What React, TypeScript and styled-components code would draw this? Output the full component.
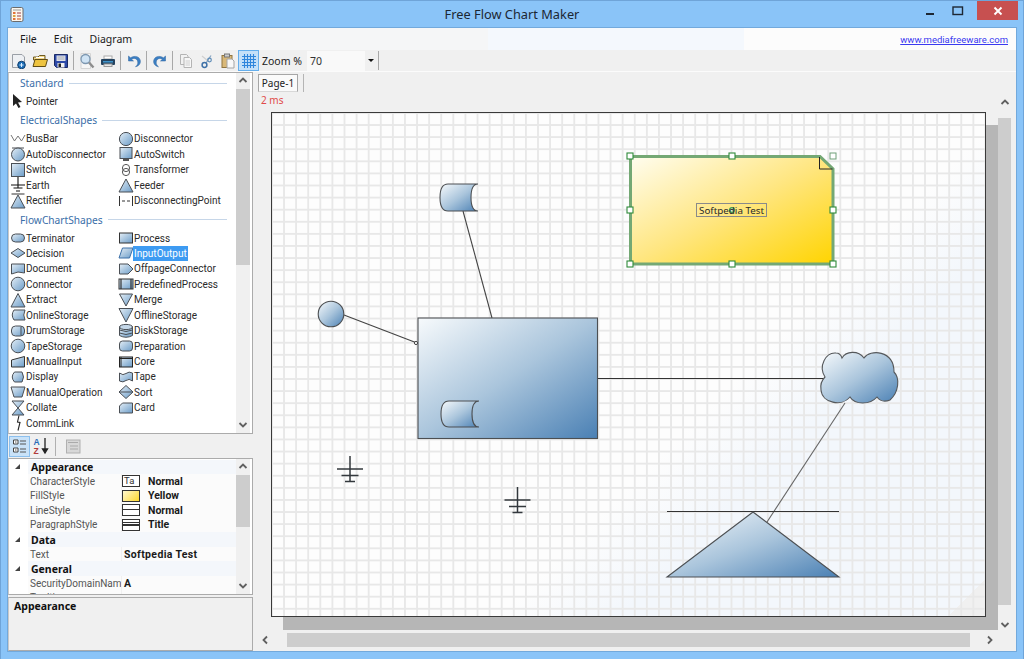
import React from "react";
import styled, { createGlobalStyle } from "styled-components";

const GlobalStyle = createGlobalStyle`
  html, body { margin: 0; padding: 0; background: #8ac4f8; }
  * { box-sizing: border-box; }
`;

const UI_FONT = `"Noto Sans", "Open Sans", "Liberation Sans", sans-serif`;
const LIST_FONT = `Roboto, "Noto Sans", "Liberation Sans", sans-serif`;

const Window = styled.div`
  width: 1024px;
  height: 659px;
  display: flex;
  flex-direction: column;
  background: #8ac4f8;
  border: 1px solid #6fa4d8;
  border-bottom: 0;
  font-family: ${UI_FONT};
  overflow: hidden;
`;

const TitleBar = styled.div`
  height: 26px;
  flex: none;
  display: grid;
  grid-template-columns: 1fr auto 1fr;
  align-items: center;
`;

const AppIconBox = styled.div`
  display: flex;
  padding-left: 9px;
`;

const Title = styled.div`
  font-size: 12.8px;
  color: #1c2733;
  padding-bottom: 1px;
`;

const WindowButtons = styled.div`
  display: flex;
  justify-self: end;
  align-self: start;
  align-items: center;
  margin-right: 5px;
`;

const WinButton = styled.div`
  width: 28px;
  height: 19px;
  display: flex;
  align-items: center;
  justify-content: center;
`;

const CloseButton = styled(WinButton)`
  width: 41px;
  background: #c75050;
  margin-left: 5px;
`;

const Client = styled.div`
  flex: 1;
  min-height: 0;
  margin: 0 6px 7px 6px;
  display: flex;
  flex-direction: column;
  background: #f0f0f0;
  border: 1px solid #72a9dc;
`;

const MenuBar = styled.div`
  height: 22px;
  flex: none;
  display: flex;
  align-items: center;
  justify-content: space-between;
  padding: 0 8px 0 4px;
  background: linear-gradient(to right, #f5f6f7 480px, #f4f8fd 480px, #f4f8fd 736px, #fcfcfc 736px);
`;

const Menus = styled.div`
  display: flex;
`;

const MenuItem = styled.span`
  font-size: 10.5px;
  color: #1a1a1a;
  padding: 0 8px;
  margin-right: 1px;
`;

const SiteLink = styled.a`
  font-family: ${LIST_FONT};
  font-size: 9.5px;
  color: #3a3af0;
  text-decoration: underline;
`;

const ToolBar = styled.div`
  height: 22px;
  flex: none;
  display: flex;
  align-items: center;
  background: #f0f0f0;
  border-bottom: 1px solid #fbfbfb;
`;

const ToolButton = styled.div<{ $active?: boolean }>`
  width: 21px;
  height: 21px;
  flex: none;
  display: flex;
  align-items: center;
  justify-content: center;
  background: ${(p) => (p.$active ? "#c4e0f8" : "transparent")};
  outline: ${(p) => (p.$active ? "1px solid #64aeec" : "none")};
  outline-offset: -1px;
`;

const ToolSep = styled.div`
  width: 1px;
  height: 19px;
  flex: none;
  margin: 0 2px;
  background: #a8a8a8;
`;

const ZoomLabel = styled.span`
  font-size: 10.5px;
  color: #222;
  margin-left: 3px;
  width: 45px;
  flex: none;
  white-space: nowrap;
`;

const ZoomCombo = styled.div`
  width: 69px;
  height: 20px;
  flex: none;
  display: flex;
  align-items: center;
  justify-content: space-between;
  background: #f9f9f9;
  font-size: 10.5px;
  color: #333;
  padding-left: 3px;
`;

const ComboArrow = styled.div`
  width: 11px;
  height: 100%;
  display: flex;
  align-items: center;
  justify-content: center;
  background: #f0f0f0;
  &::after {
    content: "";
    border-left: 3px solid transparent;
    border-right: 3px solid transparent;
    border-top: 3px solid #111;
  }
`;

const Main = styled.div`
  flex: 1;
  min-height: 0;
  display: flex;
`;

const LeftColumn = styled.div`
  width: 245px;
  flex: none;
  display: flex;
  flex-direction: column;
`;

const Palette = styled.div`
  height: 362px;
  flex: none;
  display: flex;
  background: #fff;
  border: 1px solid #ababab;
  border-left-color: #c8c8c8;
`;

const PaletteList = styled.div`
  flex: 1;
  min-width: 0;
  overflow: hidden;
  margin-top: -1.3px;
  padding-left: 1px;
`;

const SectionHeader = styled.div`
  height: 19px;
  display: flex;
  align-items: center;
  gap: 5px;
  margin: 1.8px 9px 1.2px 10px;
  font-size: 10.2px;
  color: #3a6ea8;
  &::after {
    content: "";
    flex: 1;
    height: 1px;
    background: #c6d6e8;
  }
`;

const ShapeGrid = styled.div`
  display: grid;
  grid-template-columns: 108px 108px;
`;

const ShapeRow = styled.div`
  height: 15.45px;
  display: flex;
  align-items: center;
  white-space: nowrap;
`;

const ShapeName = styled.span<{ $selected?: boolean }>`
  font-family: ${LIST_FONT};
  font-size: 10px;
  line-height: 15px;
  padding: 0 1px;
  margin-left: -1px;
  color: ${(p) => (p.$selected ? "#fff" : "#2a2a2a")};
  background: ${(p) => (p.$selected ? "#3d9bf2" : "transparent")};
`;

const VScroll = styled.div`
  width: 14px;
  flex: none;
  margin-right: 2px;
  display: flex;
  flex-direction: column;
  align-items: center;
  background: #f0f0f0;
`;

const PageVScroll = styled(VScroll)`
  width: 13px;
  margin-right: 5px;
  margin-bottom: 18px;
  padding-top: 3px;
`;

const ArrowCell = styled.div`
  height: 16px;
  width: 100%;
  flex: none;
  display: flex;
  align-items: center;
  justify-content: center;
`;

const Thumb = styled.div<{ $size: number; $gap?: number }>`
  width: 100%;
  height: ${(p) => p.$size}px;
  flex: none;
  margin-top: ${(p) => p.$gap ?? 0}px;
  background: #cdcdcd;
`;

const ScrollSpacer = styled.div`
  flex: 1;
`;

const PropTools = styled.div`
  height: 24px;
  flex: none;
  display: flex;
  align-items: center;
  padding-left: 1px;
`;

const PropButton = styled.div<{ $active?: boolean }>`
  width: 21px;
  height: 21px;
  display: flex;
  align-items: center;
  justify-content: center;
  background: ${(p) => (p.$active ? "#c9e2f8" : "transparent")};
  outline: ${(p) => (p.$active ? "1px solid #8cc0ee" : "none")};
  outline-offset: -1px;
`;

const PropSep = styled.div`
  width: 1px;
  height: 19px;
  margin: 0 6px 0 4px;
  background: #b0b0b0;
`;

const PropGrid = styled.div`
  height: 137px;
  flex: none;
  display: flex;
  background: #fff;
  border: 1px solid #ababab;
  border-left-color: #c8c8c8;
`;

const PropRows = styled.div`
  flex: 1;
  min-width: 0;
  overflow: hidden;
  padding-top: 0.5px;
`;

const CategoryRow = styled.div`
  height: 14.55px;
  display: flex;
  align-items: center;
  font-size: 10.5px;
  font-weight: 700;
  color: #111;
`;

const Caret = styled.div`
  width: 19px;
  height: 100%;
  flex: none;
  display: flex;
  align-items: center;
  justify-content: center;
  padding-right: 3px;
  &::after {
    content: "";
    border-left: 5px solid transparent;
    border-bottom: 5px solid #444;
  }
`;

const CategoryName = styled.div`
  flex: 1;
  height: 100%;
  display: flex;
  align-items: center;
  background: #f4f7fb;
  padding-left: 3px;
`;

const PropRow = styled.div`
  height: 14.55px;
  display: grid;
  grid-template-columns: 19px 93px 1fr;
  align-items: center;
  background: linear-gradient(to right, #fff 19px, #fbfbfb 19px);
`;

const PropName = styled.div`
  grid-column: 2;
  font-family: ${LIST_FONT};
  font-size: 10px;
  color: #555;
  padding-left: 2px;
  overflow: hidden;
  white-space: nowrap;
`;

const PropValue = styled.div<{ $wide?: boolean }>`
  height: 100%;
  display: flex;
  align-items: center;
  gap: 8px;
  padding-left: ${(p) => (p.$wide ? 2 : 0)}px;
  border-left: 1px solid #f0f0f0;
  font-family: ${LIST_FONT};
  font-size: 10.5px;
  font-weight: 700;
  letter-spacing: ${(p) => (p.$wide ? 0.35 : 0)}px;
  color: #1a1a1a;
  white-space: nowrap;
`;

const Swatch = styled.div<{ $fill?: string }>`
  width: 18px;
  height: 12px;
  flex: none;
  border: 1px solid #333;
  background: ${(p) => p.$fill ?? "#fff"};
  display: flex;
  align-items: center;
  font-size: 9.5px;
  font-weight: 400;
  line-height: 10px;
  padding-left: 1px;
  color: #333;
`;

const Description = styled.div`
  flex: 1;
  min-height: 0;
  margin-top: 2px;
  border: 1px solid #ababab;
  border-left-color: #c8c8c8;
  padding: 1px 5px;
  font-size: 10.5px;
  font-weight: 700;
  color: #111;
  background: #f0f0f0;
`;

const RightColumn = styled.div`
  flex: 1;
  min-width: 0;
  display: flex;
  flex-direction: column;
`;

const TabStrip = styled.div`
  height: 20px;
  flex: none;
  display: flex;
  align-items: stretch;
  padding: 2px 0 0 5px;
`;

const Tab = styled.div`
  width: 40px;
  height: 18px;
  display: flex;
  align-items: center;
  justify-content: center;
  background: #fafafa;
  border: 1px solid #a6a6a6;
  border-bottom-color: #d8d8d8;
  font-size: 10px;
  color: #222;
`;

const TabEnd = styled.div`
  width: 1px;
  margin-left: 5px;
  background: #b4b4b4;
`;

const Timing = styled.div`
  height: 16px;
  flex: none;
  padding-left: 8px;
  font-size: 10px;
  line-height: 16px;
  color: #e04a4a;
`;

const ViewerRow = styled.div`
  flex: 1;
  min-height: 0;
  display: flex;
`;

const ViewerColumn = styled.div`
  flex: 1;
  min-width: 0;
  display: flex;
  flex-direction: column;
`;

const Scroller = styled.div`
  flex: 1;
  min-height: 0;
  padding: 4px 0 0 18px;
  overflow: hidden;
`;

const Page = styled.div`
  position: relative;
  width: 715px;
  height: 505px;
  border: 1px solid #3a3a3a;
  box-shadow: 12px 13px 0 #b6b6b6;
  background-color: #fcfcfc;
  background-image:
    linear-gradient(to right, #e8e8e8 2px, transparent 2px),
    linear-gradient(to bottom, #e8e8e8 2px, transparent 2px),
    linear-gradient(135deg, #fdfdfd 0%, #fdfdfd 60%, #f3f7fc 70%, #f3f7fc 97%, #f0f0f0 97%);
  background-size: 12.1px 12.1px, 12.1px 12.1px, 100% 100%;
  background-position: -1px -1px, -1px -1px, 0 0;
`;

const Diagram = styled.svg`
  position: absolute;
  left: -1px;
  top: -1px;
  display: block;
`;

const NodeLabel = styled.div`
  position: absolute;
  left: 424px;
  top: 90px;
  width: 71px;
  height: 14px;
  display: flex;
  align-items: center;
  justify-content: center;
  border: 1px solid #8a8a8a;
  font-size: 9.8px;
  color: #2a2a2a;
  white-space: nowrap;
`;

const HScroll = styled.div`
  height: 15px;
  flex: none;
  display: flex;
  align-items: center;
  margin-left: 5px;
  margin-bottom: 4px;
  background: #f0f0f0;
`;

const HArrow = styled.div`
  width: 16px;
  height: 100%;
  flex: none;
  display: flex;
  align-items: center;
  justify-content: center;
`;

const HThumb = styled.div`
  width: 683px;
  height: 14px;
  flex: none;
  margin-left: 13px;
  background: #cdcdcd;
`;

const Defs = styled.svg`
  position: absolute;
  width: 0;
  height: 0;
`;

const Chevron = ({ dir }: { dir: "up" | "down" | "left" | "right" }) => {
  const d = {
    up: "M1.5 6 L5 2.5 L8.5 6",
    down: "M1.5 3 L5 6.5 L8.5 3",
    left: "M6 1.5 L2.5 5 L6 8.5",
    right: "M3 1.5 L6.5 5 L3 8.5",
  }[dir];
  return (
    <svg width="10" height="10" viewBox="0 0 10 10">
      <path d={d} fill="none" stroke="#606060" strokeWidth="1.8" />
    </svg>
  );
};

const F = "url(#shapeFill)";
const S = "#4a4f55";

// palette glyphs, drawn on a 16 box
const glyphs: Record<string, React.ReactNode> = {
  Pointer: <path d="M3 1 V13 L6 10.5 L8.5 15 L10.5 14 L8 9.5 L12 9 Z" fill="#222" />,
  BusBar: <path d="M1 4 L4.5 10 L8 5 L11.5 10 L15 4" fill="none" stroke="#777" />,
  Disconnector: <circle cx="8" cy="8" r="6.6" fill={F} stroke={S} />,
  AutoDisconnector: (
    <>
      <path d="M2 2 H14" stroke={S} />
      <circle cx="8" cy="8.5" r="6.5" fill={F} stroke={S} />
    </>
  ),
  AutoSwitch: (
    <>
      <rect x="2" y="1.5" width="12" height="11" fill={F} stroke={S} />
      <path d="M5 13 H11 V15 H5 Z" fill="#555" />
    </>
  ),
  Switch: <rect x="1.5" y="1.5" width="13" height="13" fill={F} stroke={S} />,
  Transformer: (
    <>
      <circle cx="8" cy="6" r="3.6" fill="#fff" stroke="#555" />
      <circle cx="8" cy="10" r="3.6" fill="none" stroke="#555" />
    </>
  ),
  Earth: <path d="M8 0 V11 M1 8 H15 M3.5 11 H12.5 M6 14 H10" fill="none" stroke="#111" strokeWidth="1.1" />,
  Feeder: <path d="M8 2 L15 15 H1 Z" fill={F} stroke={S} />,
  Rectifier: (
    <>
      <path d="M1.5 1 H14.5" stroke="#333" />
      <path d="M8 2 L15 15 H1 Z" fill={F} stroke={S} />
    </>
  ),
  DisconnectingPoint: <path d="M1.5 3 V13 M14.5 3 V13 M4 8 H7 M9 8 H12" fill="none" stroke="#333" />,
  Terminator: <rect x="1.5" y="4" width="13" height="8" rx="4" fill={F} stroke={S} />,
  Process: <rect x="1.5" y="3" width="13" height="10" fill={F} stroke="#333" />,
  Decision: <path d="M8 3.5 L15 8 L8 12.5 L1 8 Z" fill={F} stroke={S} />,
  InputOutput: <path d="M4.5 3 H15 L11.5 13 H1 Z" fill={F} stroke="#3c70a8" />,
  Document: <path d="M1.5 3 H14.5 V12 Q8 9.5 1.5 13 Z" fill={F} stroke={S} />,
  OffpageConnector: <path d="M1.5 3 H10 L15 8 L10 13 H1.5 Z" fill={F} stroke={S} />,
  Connector: <circle cx="8" cy="8" r="6.8" fill={F} stroke={S} />,
  PredefinedProcess: (
    <>
      <rect x="1" y="3" width="14" height="10" fill={F} stroke="#333" />
      <path d="M3 3 V13 M13 3 V13" stroke="#333" strokeWidth="1.2" />
    </>
  ),
  Extract: <path d="M8 1.5 L15 15 H1 Z" fill={F} stroke={S} />,
  Merge: <path d="M1.5 2 H14.5 L8 14 Z" fill={F} stroke={S} />,
  OnlineStorage: <path d="M4 3 H15 Q12.5 8 15 13 H4 Q0.5 8 4 3 Z" fill={F} stroke={S} />,
  OfflineStorage: <path d="M1 1.5 H15 L8 15 Z" fill={F} stroke={S} />,
  DrumStorage: (
    <>
      <rect x="1.5" y="3" width="13" height="10" rx="4" fill={F} stroke={S} />
      <path d="M11 3.5 V12.5" stroke={S} />
    </>
  ),
  DiskStorage: (
    <>
      <path d="M1.5 4 V12.5 Q8 16 14.5 12.5 V4 Z" fill={F} stroke={S} />
      <ellipse cx="8" cy="4" rx="6.5" ry="2.6" fill="#c5d8e9" stroke={S} />
      <path d="M1.5 7 Q8 10 14.5 7 M1.5 10 Q8 13 14.5 10" fill="none" stroke={S} />
    </>
  ),
  TapeStorage: <circle cx="8" cy="8" r="6.8" fill={F} stroke={S} />,
  Preparation: <rect x="1.5" y="3" width="13" height="10" rx="3" fill={F} stroke={S} />,
  ManualInput: <path d="M1.5 6 L14.5 2.5 V13 H1.5 Z" fill={F} stroke="#333" />,
  Core: (
    <>
      <rect x="1.5" y="3" width="13" height="10" fill={F} stroke="#222" />
      <path d="M1.5 4.5 H14.5 M3 3 V13" stroke="#222" />
    </>
  ),
  Display: <path d="M4.5 3 H12 Q15 8 12 13 H4.5 Q0 8 4.5 3 Z" fill={F} stroke={S} />,
  Tape: <path d="M1.5 4 Q5 7 8 4.5 T14.5 4 V12 Q11 9 8 11.5 T1.5 12 Z" fill={F} stroke={S} />,
  ManualOperation: <path d="M1 3 H15 L12 13 H4 Z" fill={F} stroke={S} />,
  Sort: (
    <>
      <path d="M8 1.5 L15 8 L8 14.5 L1 8 Z" fill={F} stroke={S} />
      <path d="M1 8 H15" stroke={S} />
    </>
  ),
  Collate: <path d="M2 1 H14 L2 15 H14 Z" fill={F} stroke={S} />,
  Card: <path d="M4.5 3 H14.5 V13 H1.5 V6 Z" fill={F} stroke={S} />,
  CommLink: <path d="M9 0.5 L7.5 7 L10 7.5 L8 15.5" fill="none" stroke="#222" strokeWidth="1.1" />,
};

const sections = [
  { title: "Standard", items: ["Pointer"] },
  {
    title: "ElectricalShapes",
    items: [
      "BusBar", "Disconnector", "AutoDisconnector", "AutoSwitch", "Switch", "Transformer",
      "Earth", "Feeder", "Rectifier", "DisconnectingPoint",
    ],
  },
  {
    title: "FlowChartShapes",
    items: [
      "Terminator", "Process", "Decision", "InputOutput", "Document", "OffpageConnector",
      "Connector", "PredefinedProcess", "Extract", "Merge", "OnlineStorage", "OfflineStorage",
      "DrumStorage", "DiskStorage", "TapeStorage", "Preparation", "ManualInput", "Core",
      "Display", "Tape", "ManualOperation", "Sort", "Collate", "Card", "CommLink",
    ],
  },
];

const AppIcon = () => (
  <svg width="14" height="15" viewBox="0 0 14 15">
    <rect x="1" y="0.5" width="12" height="14" rx="1.5" fill="#fbf6ee" stroke="#6b6b6b" />
    <path d="M3 3 H11" stroke="#999" />
    <rect x="3" y="5" width="2.5" height="2" fill="#e2703a" />
    <rect x="7" y="5" width="4" height="2" fill="#c99" />
    <rect x="3" y="8" width="2.5" height="2" fill="#d9a441" />
    <rect x="7" y="8" width="4" height="2" fill="#c99" />
    <rect x="3" y="11" width="2.5" height="2" fill="#e2703a" />
    <rect x="7" y="11" width="4" height="2" fill="#e2a07a" />
  </svg>
);

const tools: Record<string, React.ReactNode> = {
  new: (
    <>
      <path d="M1.5 1.5 H11 L13.5 4 V14.5 H1.5 Z" fill="#eef0f3" stroke="#9a9fa6" />
      <circle cx="10.5" cy="12" r="3.8" fill="#1d6fb8" stroke="#123f6e" />
      <path d="M10.5 10 V14 M8.5 12 H12.5" stroke="#dff0ff" />
    </>
  ),
  open: (
    <>
      <path d="M1.5 4 H6 L7.5 2.5 H13 V7 H1.5 Z" fill="#f3d98a" stroke="#6e5a20" />
      <path d="M1 13.5 L3 6.5 H15.5 L13.5 13.5 Z" fill="#edc33f" stroke="#5e4a12" />
      <path d="M4 4.5 H12" stroke="#fff" />
    </>
  ),
  save: (
    <>
      <path d="M1.5 1.5 H14.5 V14.5 H3.5 L1.5 12.5 Z" fill="#2c49a8" stroke="#1b2a66" />
      <rect x="3.5" y="2.5" width="9" height="5.5" fill="#dfe2e8" />
      <path d="M4.5 4 H11.5 M4.5 6 H11.5" stroke="#a8acb8" />
      <rect x="4.5" y="10" width="7" height="4.5" fill="#f2f2f2" />
      <rect x="5.5" y="10.5" width="2.5" height="3.5" fill="#222" />
    </>
  ),
  find: (
    <>
      <path d="M2 0.5 H11.5 V15.5 H2 Z" fill="#f6f6f6" stroke="#d4d4d4" />
      <circle cx="6.5" cy="6" r="4.5" fill="#cfe3f4" stroke="#7d97b0" strokeWidth="1.3" />
      <path d="M10 9.5 L14.5 14.5" stroke="#8d8d8d" strokeWidth="2.4" />
    </>
  ),
  print: (
    <>
      <rect x="4" y="3" width="8" height="3" fill="#fff" stroke="#aaa" />
      <rect x="1" y="6" width="14" height="6" rx="1" fill="#24435f" />
      <rect x="3" y="8" width="10" height="1.5" fill="#3f93c9" />
      <rect x="4" y="11" width="8" height="2.5" fill="#e8e8e8" stroke="#999" />
    </>
  ),
  undo: (
    <path d="M2.5 3 V8 H7.5 L5.6 6.2 C8 4.5 11.5 5.6 11.8 9 C12 11 11 12.5 9.5 13.8 C13 13 14.8 10.5 14.3 7.5 C13.6 3.6 8.8 2 4.5 4.8 Z" fill="#3b7fc4" stroke="#2d639c" strokeWidth="0.5" />
  ),
  redo: (
    <path d="M13.5 3 V8 H8.5 L10.4 6.2 C8 4.5 4.5 5.6 4.2 9 C4 11 5 12.5 6.5 13.8 C3 13 1.2 10.5 1.7 7.5 C2.4 3.6 7.2 2 11.5 4.8 Z" fill="#3b7fc4" stroke="#2d639c" strokeWidth="0.5" />
  ),
  copy: (
    <>
      <path d="M2.5 1.5 H8.5 L10 3 V11.5 H2.5 Z" fill="#f2f2f2" stroke="#b4b4b4" />
      <path d="M6 4.5 H11.5 L13.5 6.5 V14.5 H6 Z" fill="#f7f7f7" stroke="#b4b4b4" />
      <path d="M7.5 8 H12 M7.5 10 H12 M7.5 12 H12" stroke="#cfcfcf" />
    </>
  ),
  cut: (
    <>
      <path d="M3 3 L9 8" fill="none" stroke="#d0d0d0" strokeWidth="1.2" />
      <path d="M12 2.5 L7 10" fill="none" stroke="#8aa6c2" strokeWidth="1.3" />
      <circle cx="5.5" cy="12" r="2.4" fill="none" stroke="#3f72a8" strokeWidth="1.5" />
      <circle cx="10.5" cy="7" r="1.8" fill="none" stroke="#5f8db8" strokeWidth="1.2" />
    </>
  ),
  paste: (
    <>
      <rect x="2" y="2.5" width="10" height="12" fill="#d9b878" stroke="#8f7440" />
      <rect x="4.5" y="1" width="5" height="3" fill="#cfcfcf" stroke="#777" />
      <path d="M7 6 H12 L14 8 V15 H7 Z" fill="#f8f8f8" stroke="#a4a4a4" />
    </>
  ),
  grid: (
    <path
      d="M1 3.5 H15 M1 6.5 H15 M1 9.5 H15 M1 12.5 H15 M3.5 1 V15 M6.5 1 V15 M9.5 1 V15 M12.5 1 V15"
      stroke="#2f86dc"
      strokeWidth="1.1"
    />
  ),
};

const Tool = ({ name, active }: { name: string; active?: boolean }) => (
  <ToolButton $active={active}>
    <svg width="16" height="16" viewBox="0 0 16 16">{tools[name]}</svg>
  </ToolButton>
);

const propData = [
  {
    name: "Appearance",
    rows: [
      { label: "CharacterStyle", value: "Normal", swatch: <Swatch>Ta</Swatch> },
      { label: "FillStyle", value: "Yellow", swatch: <Swatch $fill="linear-gradient(135deg,#fff8d0,#ffd92e)" /> },
      { label: "LineStyle", value: "Normal", swatch: <Swatch $fill="linear-gradient(#fff 45%,#333 45%,#333 55%,#fff 55%)" /> },
      { label: "ParagraphStyle", value: "Title", swatch: <Swatch $fill="linear-gradient(#fff 15%,#333 15%,#333 25%,#fff 25%,#fff 42%,#333 42%,#333 58%,#fff 58%)" /> },
    ],
  },
  { name: "Data", rows: [{ label: "Text", value: "Softpedia Test" }] },
  {
    name: "General",
    rows: [
      { label: "SecurityDomainName", value: "A" },
      { label: "Tooltip", value: "" },
    ],
  },
];

const handles: [number, number][] = [
  [630, 156], [732, 156], [630, 210], [833, 210], [630, 264], [732, 264], [833, 264],
];

const Earth = ({ x, y }: { x: number; y: number }) => (
  <path
    d={`M${x} ${y} V${y + 25} M${x - 13} ${y + 13} H${x + 13} M${x - 8.5} ${y + 19.5} H${x + 8.5} M${x - 5} ${y + 25.5} H${x + 5}`}
    fill="none"
    stroke="#33383d"
    strokeWidth="1.5"
  />
);

const Drum = ({ x, y, h }: { x: number; y: number; h: number }) => (
  <path
    d={`M${x + 38} ${y} H${x + 8} Q${x} ${y} ${x} ${y + h / 2} Q${x} ${y + h} ${x + 8} ${y + h} H${x + 38} Q${x + 31} ${y + h} ${x + 31} ${y + h / 2} Q${x + 31} ${y} ${x + 38} ${y} Z`}
    fill="url(#nodeFill)"
    stroke="#4c4f52"
    strokeWidth="1.1"
  />
);

const App: React.FC = () => {
  return (
    <Window>
      <GlobalStyle />
      <Defs>
        <defs>
          <linearGradient id="shapeFill" x1="0" y1="0" x2="1" y2="1">
            <stop offset="0" stopColor="#e4eef6" />
            <stop offset="1" stopColor="#6b9cc8" />
          </linearGradient>
          <linearGradient id="nodeFill" x1="0" y1="0" x2="1" y2="1">
            <stop offset="0" stopColor="#f7fafc" />
            <stop offset="0.5" stopColor="#aac5dc" />
            <stop offset="1" stopColor="#4a80b4" />
          </linearGradient>
          <linearGradient id="noteFill" x1="0" y1="0" x2="1" y2="1">
            <stop offset="0" stopColor="#fffdf0" />
            <stop offset="0.5" stopColor="#ffe680" />
            <stop offset="1" stopColor="#ffd400" />
          </linearGradient>
        </defs>
      </Defs>

      <TitleBar>
        <AppIconBox>
          <AppIcon />
        </AppIconBox>
        <Title>Free Flow Chart Maker</Title>
        <WindowButtons>
          <WinButton>
            <svg width="10" height="10" viewBox="0 0 10 10"><rect x="1" y="7" width="8" height="2" fill="#1d2733" /></svg>
          </WinButton>
          <WinButton>
            <svg width="12" height="10" viewBox="0 0 12 10"><rect x="1" y="1" width="9.5" height="7.5" fill="none" stroke="#1d2733" strokeWidth="1.4" /></svg>
          </WinButton>
          <CloseButton>
            <svg width="10" height="10" viewBox="0 0 10 10"><path d="M1.5 1.5 L8.5 8.5 M8.5 1.5 L1.5 8.5" stroke="#fff" strokeWidth="1.9" /></svg>
          </CloseButton>
        </WindowButtons>
      </TitleBar>

      <Client>
        <MenuBar>
          <Menus>
            <MenuItem>File</MenuItem>
            <MenuItem>Edit</MenuItem>
            <MenuItem>Diagram</MenuItem>
          </Menus>
          <SiteLink href="#">www.mediafreeware.com</SiteLink>
        </MenuBar>

        <ToolBar>
          <Tool name="new" />
          <Tool name="open" />
          <Tool name="save" />
          <ToolSep />
          <Tool name="find" />
          <Tool name="print" />
          <ToolSep />
          <Tool name="undo" />
          <ToolSep />
          <Tool name="redo" />
          <ToolSep />
          <Tool name="copy" />
          <Tool name="cut" />
          <Tool name="paste" />
          <Tool name="grid" active />
          <ZoomLabel>Zoom %</ZoomLabel>
          <ZoomCombo>
            70
            <ComboArrow />
          </ZoomCombo>
          <ToolSep />
        </ToolBar>

        <Main>
          <LeftColumn>
            <Palette>
              <PaletteList>
                {sections.map((section) => (
                  <div key={section.title}>
                    <SectionHeader>{section.title}</SectionHeader>
                    <ShapeGrid>
                      {section.items.map((item) => (
                        <ShapeRow key={item}>
                          <svg width="16" height="16" viewBox="0 0 16 16">{glyphs[item]}</svg>
                          <ShapeName $selected={item === "InputOutput"}>{item}</ShapeName>
                        </ShapeRow>
                      ))}
                    </ShapeGrid>
                  </div>
                ))}
              </PaletteList>
              <VScroll>
                <ArrowCell><Chevron dir="up" /></ArrowCell>
                <Thumb $size={176} />
                <ScrollSpacer />
                <ArrowCell><Chevron dir="down" /></ArrowCell>
              </VScroll>
            </Palette>

            <PropTools>
              <PropButton $active>
                <svg width="16" height="16" viewBox="0 0 16 16">
                  <path d="M1.5 2 H6 V6 H1.5 Z M1.5 10 H6 V14 H1.5 Z" fill="#fff" stroke="#444" />
                  <path d="M3 4 H4.5 M3 12 H4.5 M8 3 H14 M8 6 H14 M8 11 H14 M8 14 H14" stroke="#555" />
                </svg>
              </PropButton>
              <PropButton>
                <svg width="16" height="18" viewBox="0 0 16 18">
                  <text x="0.5" y="8" fontSize="8.5" fontFamily="Liberation Sans, sans-serif" fontWeight="700" fill="#2c6cb8">A</text>
                  <text x="0.5" y="17" fontSize="8.5" fontFamily="Liberation Sans, sans-serif" fontWeight="700" fill="#b23a3a">Z</text>
                  <path d="M12 1 V14 M9.5 12 L12 16 L14.5 12 Z" stroke="#222" strokeWidth="1.3" fill="#222" />
                </svg>
              </PropButton>
              <PropSep />
              <PropButton>
                <svg width="16" height="15" viewBox="0 0 16 15">
                  <rect x="1.5" y="1" width="13.5" height="13" fill="#d8d8d8" stroke="#b0b0b0" />
                  <path d="M3 3.5 H13 M5 7 H13 M5 10 H13" stroke="#aaa" />
                </svg>
              </PropButton>
            </PropTools>

            <PropGrid>
              <PropRows>
                {propData.map((cat) => (
                  <React.Fragment key={cat.name}>
                    <CategoryRow>
                      <Caret />
                      <CategoryName>{cat.name}</CategoryName>
                    </CategoryRow>
                    {cat.rows.map((row) => (
                      <PropRow key={row.label}>
                        <PropName>{row.label}</PropName>
                        <PropValue $wide={!row.swatch}>
                          {row.swatch}
                          {row.value}
                        </PropValue>
                      </PropRow>
                    ))}
                  </React.Fragment>
                ))}
              </PropRows>
              <VScroll>
                <ArrowCell><Chevron dir="up" /></ArrowCell>
                <Thumb $size={52} />
                <ScrollSpacer />
                <ArrowCell><Chevron dir="down" /></ArrowCell>
              </VScroll>
            </PropGrid>

            <Description>Appearance</Description>
          </LeftColumn>

          <RightColumn>
            <TabStrip>
              <Tab>Page-1</Tab>
              <TabEnd />
            </TabStrip>
            <ViewerRow>
              <ViewerColumn>
                <Timing>2 ms</Timing>
                <Scroller>
                  <Page>
                    <Diagram width="715" height="505" viewBox="271 112 715 505">
                      <path d="M463 211 L492 318" stroke="#444" strokeWidth="1.1" />
                      <path d="M344 315 L417 343" stroke="#444" strokeWidth="1.1" />
                      <path d="M597 378.5 H826" stroke="#333" strokeWidth="1" />
                      <path d="M845 403 L767 522" stroke="#666" strokeWidth="1.1" />
                      <Drum x={440} y={184} h={27} />
                      <circle cx="331" cy="314" r="12.8" fill="url(#nodeFill)" stroke="#4c4f52" strokeWidth="1.1" />
                      <circle cx="416" cy="343" r="1.6" fill="#fff" stroke="#444" />
                      <rect x="418" y="318" width="179.5" height="120.5" fill="url(#nodeFill)" stroke="#4c4f52" strokeWidth="1.1" />
                      <Drum x={441} y={401} h={26} />
                      <path
                        d="M825 377 C818 366 826 352 836 353 C839 353 841 355 842 358 C846 351 858 350 864 358 C870 349 894 350 894 372 C900 378 899 392 890 400 C885 402 880 401 877 397 C870 405 855 405 850 397 C842 407 822 403 821 390 C820 384 822 380 825 377 Z"
                        fill="url(#nodeFill)"
                        stroke="#55585b"
                        strokeWidth="1.1"
                      />
                      <Earth x={350} y={456} />
                      <Earth x={517.5} y={487} />
                      <path d="M667 511.5 H839" stroke="#333" strokeWidth="1" />
                      <path d="M753 512 L839 577 H667 Z" fill="url(#nodeFill)" stroke="#4c4f52" strokeWidth="1.1" />
                      <path d="M630.5 156.5 H820 L833 169 V264 H630.5 Z" fill="url(#noteFill)" stroke="#74a874" strokeWidth="3" />
                      <path d="M819.5 157 V169 H832.5" fill="none" stroke="#222" strokeWidth="1" />
                      {handles.map(([x, y]) => (
                        <rect key={`${x}-${y}`} x={x - 3} y={y - 3} width="6" height="6" fill="#fff" stroke="#2f8a3a" strokeWidth="1.1" />
                      ))}
                      <rect x="830" y="153" width="6" height="6" fill="#fff" stroke="#6f9f78" />
                      <circle cx="732" cy="210" r="2.4" fill="#d8ecd8" stroke="#3a9a4a" strokeWidth="1.2" />
                    </Diagram>
                    <NodeLabel>Softpedia Test</NodeLabel>
                  </Page>
                </Scroller>
                <HScroll>
                  <HArrow><Chevron dir="left" /></HArrow>
                  <HThumb />
                  <ScrollSpacer />
                  <HArrow><Chevron dir="right" /></HArrow>
                </HScroll>
              </ViewerColumn>
              <PageVScroll>
                <ArrowCell><Chevron dir="up" /></ArrowCell>
                <Thumb $size={487} $gap={7} />
                <ScrollSpacer />
                <ArrowCell><Chevron dir="down" /></ArrowCell>
              </PageVScroll>
            </ViewerRow>
          </RightColumn>
        </Main>
      </Client>
    </Window>
  );
};

export default App;
